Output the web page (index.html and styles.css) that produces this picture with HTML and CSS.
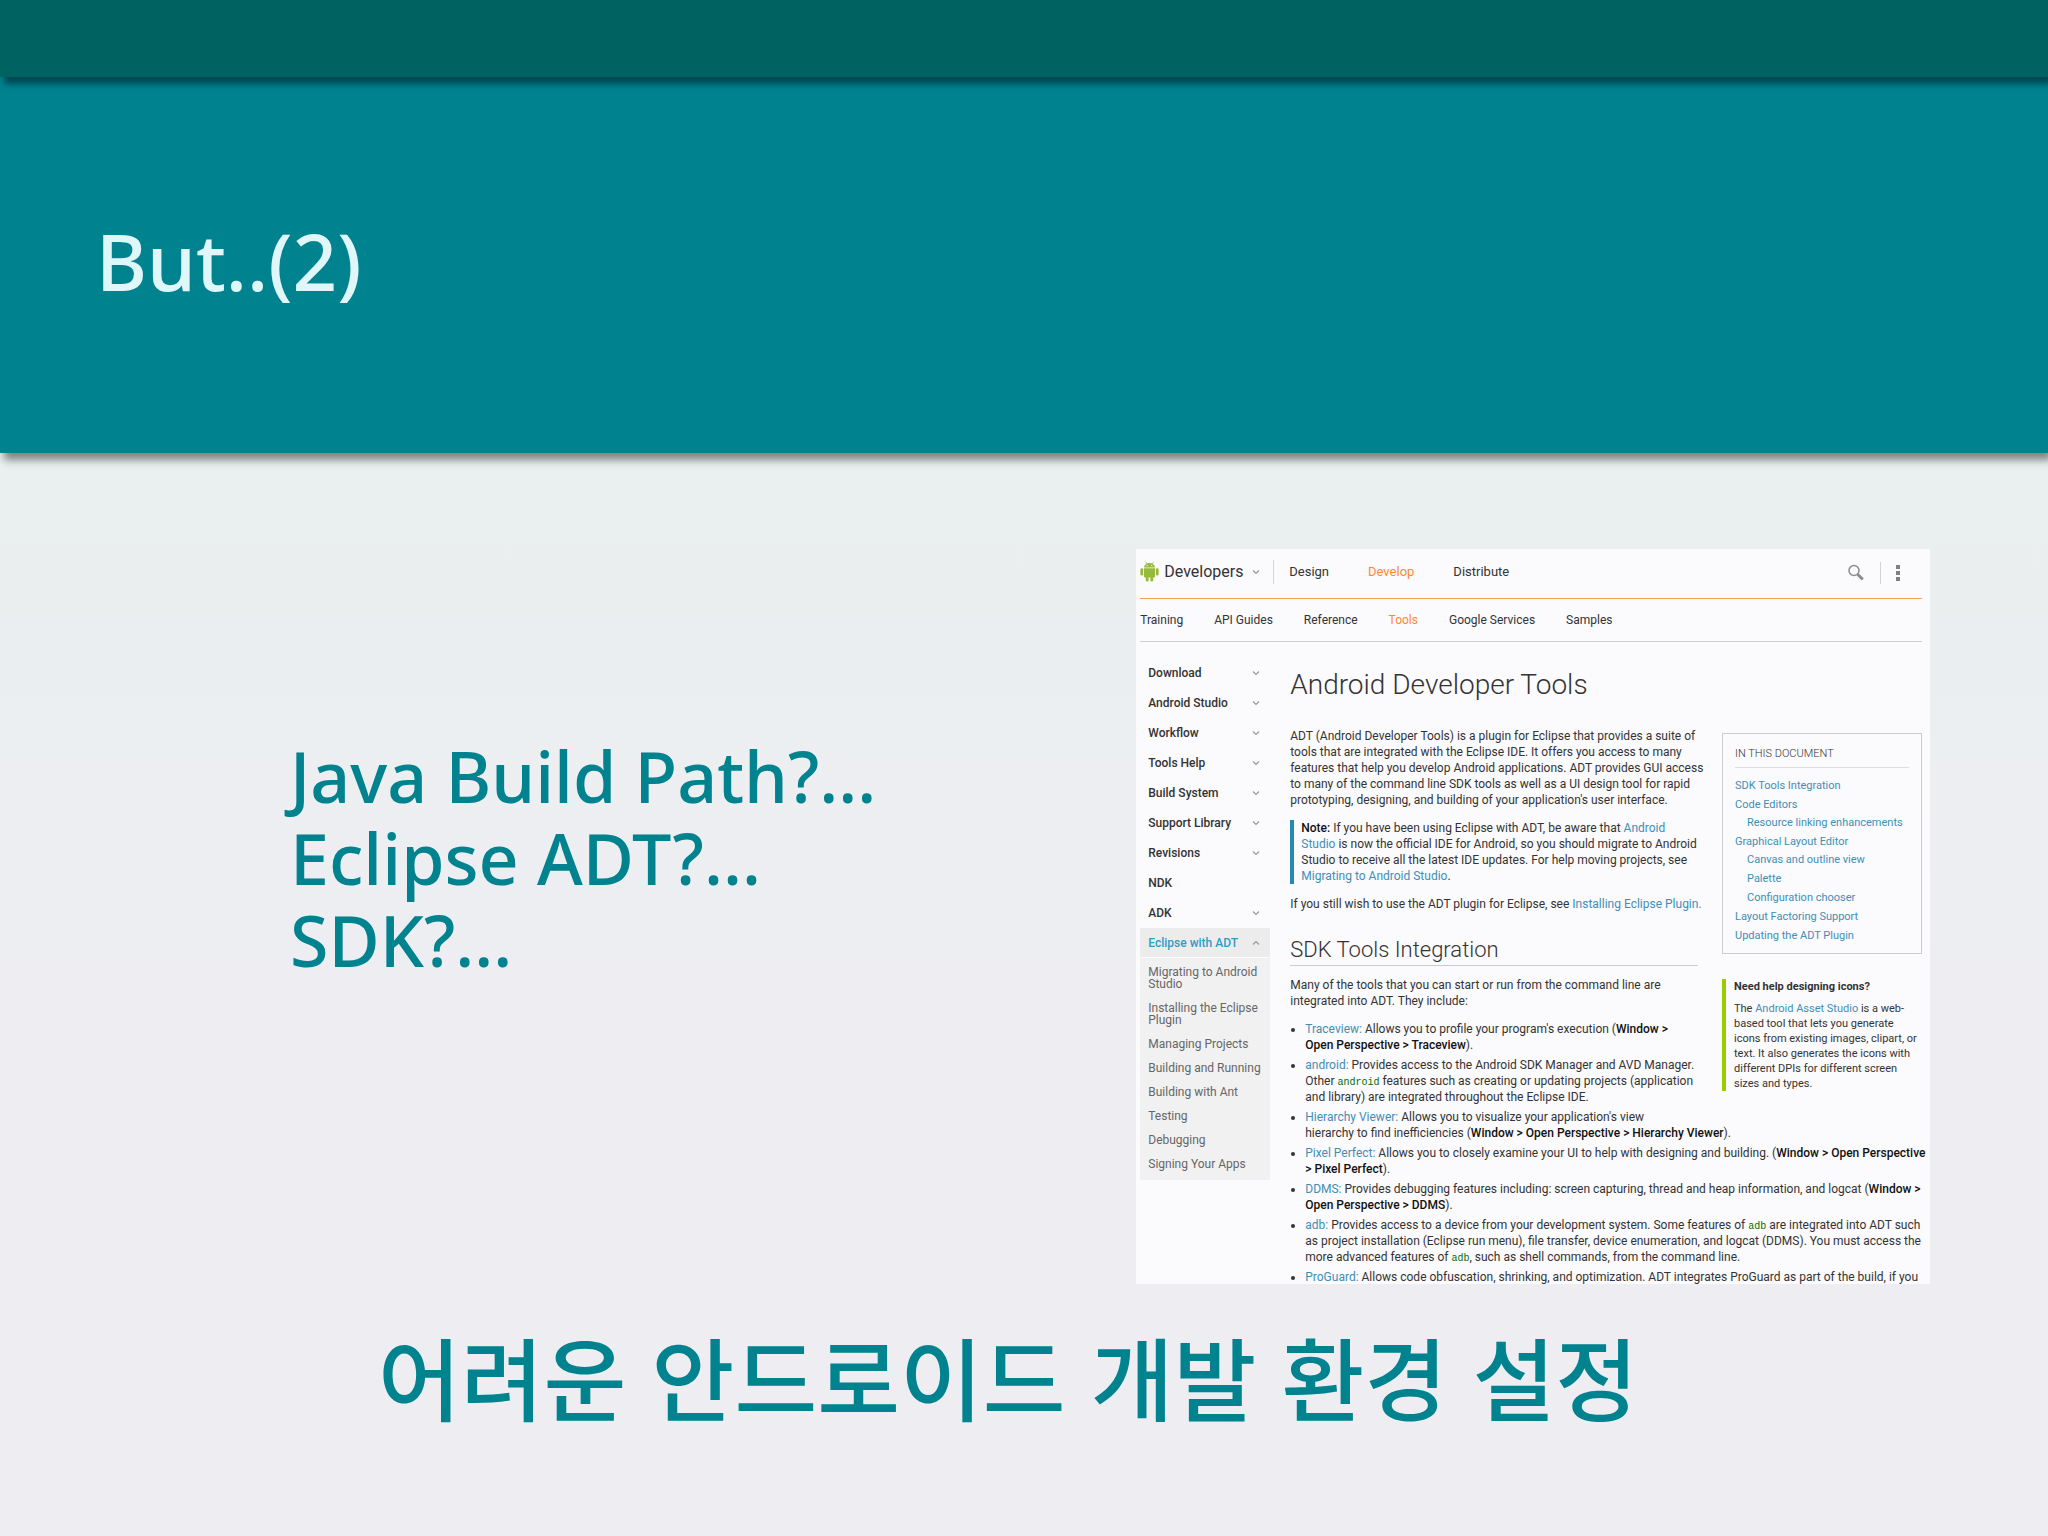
FILE: index.html
```html
<!DOCTYPE html>
<html lang="ko">

<head>
    <meta charset="UTF-8">
    <meta name="viewport" content="width=device-width, initial-scale=1.0">
    <title>But..(2)</title>
    <link rel="stylesheet" href="styles.css">
</head>

<body>
    <svg class="sprite" aria-hidden="true">
        <symbol id="chevron" viewBox="0 0 8 6">
            <path d="M1 1.5l3 3 3-3" fill="none" stroke="#999" stroke-width="1.2" />
        </symbol>
    </svg>

    <div class="status-bar"></div>
    <header class="title-bar">
        <h1>But..(2)</h1>
    </header>

    <main class="slide">
        <div class="columns">
            <p class="questions">Java Build Path?...<br>Eclipse ADT?...<br>SDK?...</p>

            <!-- Android Developers page -->
            <section class="page">
                <div class="page-header">
                    <a class="brand" href="#">
                        <svg class="robot" viewBox="0 0 19 21">
                            <g fill="#97b93c">
                                <path d="M4 6.500C4.200 3.800 6.400 1.900 9.500 1.900S14.800 3.800 15 6.500z" />
                                <path d="M5.500.6l1.600 2.400M13.500.6l-1.600 2.400" stroke="#97b93c" stroke-width=".7" />
                                <path d="M4 7.200h11v8a1.400 1.400 0 0 1-1.400 1.400H5.400A1.400 1.400 0 0 1 4 15.200z" />
                                <rect x=".4" y="7.200" width="2.800" height="7.400" rx="1.400" />
                                <rect x="15.800" y="7.200" width="2.800" height="7.400" rx="1.400" />
                                <rect x="5.800" y="14" width="2.800" height="6.600" rx="1.400" />
                                <rect x="10.400" y="14" width="2.800" height="6.600" rx="1.400" />
                            </g>
                            <circle cx="7.200" cy="4.400" r=".6" fill="#fff" />
                            <circle cx="11.800" cy="4.400" r=".6" fill="#fff" />
                        </svg>
                        <span>Developers</span>
                        <svg class="chevron"><use href="#chevron" /></svg>
                    </a>
                    <nav class="main-nav">
                        <a href="#">Design</a>
                        <a href="#" class="active">Develop</a>
                        <a href="#">Distribute</a>
                    </nav>
                    <button class="icon-button search" aria-label="Search">
                        <svg width="18" height="18" viewBox="0 0 18 18">
                            <circle cx="7" cy="6.500" r="5" fill="none" stroke="#8c8c8c" stroke-width="1.500" />
                            <path d="M10.800 10.500l5 5" stroke="#8c8c8c" stroke-width="3" />
                        </svg>
                    </button>
                    <button class="icon-button more" aria-label="More">
                        <svg width="4" height="16" viewBox="0 0 4 16">
                            <path d="M0 0h4v4H0zM0 6h4v4H0zM0 12h4v4H0z" fill="#808080" />
                        </svg>
                    </button>
                </div>

                <nav class="sub-nav">
                    <a href="#">Training</a>
                    <a href="#">API Guides</a>
                    <a href="#">Reference</a>
                    <a href="#" class="active">Tools</a>
                    <a href="#">Google Services</a>
                    <a href="#">Samples</a>
                </nav>

                <div class="page-body">
                    <nav class="side-nav">
                        <a href="#">Download <svg class="chevron"><use href="#chevron" /></svg></a>
                        <a href="#">Android Studio <svg class="chevron"><use href="#chevron" /></svg></a>
                        <a href="#">Workflow <svg class="chevron"><use href="#chevron" /></svg></a>
                        <a href="#">Tools Help <svg class="chevron"><use href="#chevron" /></svg></a>
                        <a href="#">Build System <svg class="chevron"><use href="#chevron" /></svg></a>
                        <a href="#">Support Library <svg class="chevron"><use href="#chevron" /></svg></a>
                        <a href="#">Revisions <svg class="chevron"><use href="#chevron" /></svg></a>
                        <a href="#">NDK</a>
                        <a href="#">ADK <svg class="chevron"><use href="#chevron" /></svg></a>
                        <div class="expanded">
                            <a href="#" class="current">Eclipse with ADT <svg class="chevron up"><use href="#chevron" /></svg></a>
                            <ul>
                                <li><a href="#">Migrating to Android<br>Studio</a></li>
                                <li><a href="#">Installing the Eclipse<br>Plugin</a></li>
                                <li><a href="#">Managing Projects</a></li>
                                <li><a href="#">Building and Running</a></li>
                                <li><a href="#">Building with Ant</a></li>
                                <li><a href="#">Testing</a></li>
                                <li><a href="#">Debugging</a></li>
                                <li><a href="#">Signing Your Apps</a></li>
                            </ul>
                        </div>
                    </nav>

                    <article class="article">
                        <h2>Android Developer Tools</h2>

                        <aside class="aside">
                            <div class="toc">
                                <h4>IN THIS DOCUMENT</h4>
                                <ul>
                                    <li><a href="#">SDK Tools Integration</a></li>
                                    <li><a href="#">Code Editors</a>
                                        <ul>
                                            <li><a href="#">Resource linking enhancements</a></li>
                                        </ul>
                                    </li>
                                    <li><a href="#">Graphical Layout Editor</a>
                                        <ul>
                                            <li><a href="#">Canvas and outline view</a></li>
                                            <li><a href="#">Palette</a></li>
                                            <li><a href="#">Configuration chooser</a></li>
                                        </ul>
                                    </li>
                                    <li><a href="#">Layout Factoring Support</a></li>
                                    <li><a href="#">Updating the ADT Plugin</a></li>
                                </ul>
                            </div>
                            <div class="help">
                                <h4>Need help designing icons?</h4>
                                <p>The <a href="#">Android Asset Studio</a> is a web-<br>based tool that lets you generate<br>icons from existing images, clipart, or<br>text. It also generates the icons with<br>different DPIs for different screen<br>sizes and types.</p>
                            </div>
                        </aside>

                        <p>ADT (Android Developer Tools) is a plugin for Eclipse that provides a suite of<br>tools that are integrated with the Eclipse IDE. It offers you access to many<br>features that help you develop Android applications. ADT provides GUI access<br>to many of the command line SDK tools as well as a UI design tool for rapid<br>prototyping, designing, and building of your application's user interface.</p>
                        <p class="note"><strong>Note:</strong> If you have been using Eclipse with ADT, be aware that <a href="#">Android<br>Studio</a> is now the official IDE for Android, so you should migrate to Android<br>Studio to receive all the latest IDE updates. For help moving projects, see<br><a href="#">Migrating to Android Studio</a>.</p>
                        <p>If you still wish to use the ADT plugin for Eclipse, see <a href="#">Installing Eclipse Plugin.</a></p>

                        <h3>SDK Tools Integration</h3>
                        <p>Many of the tools that you can start or run from the command line are<br>integrated into ADT. They include:</p>
                        <ul class="tools">
                            <li><a href="#">Traceview:</a> Allows you to profile your program's execution (<strong>Window &gt;<br>Open Perspective &gt; Traceview</strong>).</li>
                            <li><a href="#">android:</a> Provides access to the Android SDK Manager and AVD Manager.<br>Other <code>android</code> features such as creating or updating projects (application<br>and library) are integrated throughout the Eclipse IDE.</li>
                            <li><a href="#">Hierarchy Viewer:</a> Allows you to visualize your application's view<br>hierarchy to find inefficiencies (<strong>Window &gt; Open Perspective &gt; Hierarchy Viewer</strong>).</li>
                            <li><a href="#">Pixel Perfect:</a> Allows you to closely examine your UI to help with designing and building. (<strong>Window &gt; Open Perspective<br>&gt; Pixel Perfect</strong>).</li>
                            <li><a href="#">DDMS:</a> Provides debugging features including: screen capturing, thread and heap information, and logcat (<strong>Window &gt;<br>Open Perspective &gt; DDMS</strong>).</li>
                            <li><a href="#">adb:</a> Provides access to a device from your development system. Some features of <code>adb</code> are integrated into ADT such<br>as project installation (Eclipse run menu), file transfer, device enumeration, and logcat (DDMS). You must access the<br>more advanced features of <code>adb</code>, such as shell commands, from the command line.</li>
                            <li><a href="#">ProGuard:</a> Allows code obfuscation, shrinking, and optimization. ADT integrates ProGuard as part of the build, if you</li>
                        </ul>
                    </article>
                </div>
            </section>
        </div>

        <p class="conclusion">어려운 안드로이드 개발 환경 설정</p>
    </main>
</body>

</html>
```

FILE: styles.css
```css
* {
    box-sizing: border-box;
}

body {
    display: flex;
    flex-direction: column;
    min-height: 100vh;
    margin: 0;
    font-family: "Noto Sans", "Noto Sans CJK KR", sans-serif;
    color: #00838f;
}

h1,
h2,
h3,
h4,
p,
ul {
    margin: 0;
    padding: 0;
}

ul {
    list-style: none;
}

a {
    color: inherit;
    text-decoration: none;
}

.sprite {
    position: absolute;
    width: 0;
    height: 0;
}

/* Slide header */
.status-bar {
    z-index: 2;
    height: 77px;
    background: #006261;
    box-shadow: 4px 7px 6px rgba(0, 50, 60, 0.7);
}

.title-bar {
    z-index: 1;
    display: flex;
    align-items: center;
    height: 376px;
    padding: 0 96px 8px;
    background: #00828f;
    box-shadow: 4px 7px 8px rgba(0, 0, 0, 0.45);
}

.title-bar h1 {
    font-size: 78px;
    font-weight: 500;
    line-height: 104px;
    color: #e0f7fa;
}

/* Slide content */
.slide {
    flex: 1;
    padding: 96px 118px 0 290px;
    background: linear-gradient(#eaefef, #eeeef2 50%);
}

.columns {
    display: flex;
    justify-content: space-between;
    align-items: flex-start;
}

.questions {
    padding-top: 186px;
    font-size: 70px;
    font-weight: 500;
    line-height: 82px;
    white-space: nowrap;
}

.conclusion {
    padding: 26px 0 0 88px;
    font-family: "Noto Sans CJK KR", sans-serif;
    font-size: 90px;
    font-weight: 500;
    line-height: 130px;
    white-space: nowrap;
}

/* Android Developers page */
.page {
    flex: 0 0 48.4%;
    padding: 0 8px 0 4px;
    overflow: hidden;
    background: #fbfafc;
    font-family: Roboto, sans-serif;
    font-size: 12px;
    line-height: 16px;
    color: #333;
    white-space: nowrap;
}

.page-header {
    display: flex;
    align-items: center;
    height: 50px;
    padding-bottom: 4px;
    border-bottom: 1px solid #f0a24c;
}

.brand {
    display: flex;
    align-items: center;
    width: 134px;
    height: 24px;
    border-right: 1px solid #d4d4d4;
    font-size: 16px;
}

.robot {
    width: 19px;
    height: 21px;
    margin-right: 5px;
}

.chevron {
    width: 8px;
    height: 6px;
}

.brand .chevron {
    margin-left: 9px;
}

.chevron.up {
    transform: rotate(180deg);
}

.main-nav {
    display: flex;
    flex: 1;
    gap: 39px;
    padding-left: 15px;
    font-size: 13px;
}

.active {
    color: #ff8833;
}

.icon-button {
    display: flex;
    align-items: center;
    height: 22px;
    margin: 2px 0 0;
    padding: 0;
    border: none;
    background: none;
}

.search {
    padding-right: 15px;
}

.more {
    padding: 0 22px 0 15px;
    border-left: 1px solid #d4d4d4;
}

.sub-nav {
    display: flex;
    align-items: center;
    gap: 31px;
    height: 43px;
    border-bottom: 1px solid #cfcfd1;
}

.page-body {
    display: flex;
    height: 642px;
}

.side-nav {
    flex: 0 0 130px;
    padding-top: 16px;
    font-weight: 500;
}

.side-nav > a,
.current {
    display: flex;
    align-items: center;
    justify-content: space-between;
    height: 30px;
    padding: 0 10px 0 8px;
}

.expanded {
    background: #f1f1f2;
}

.current {
    border-bottom: 1px solid #fbfafc;
    background: #ececed;
    color: #2f9cc5;
}

.expanded ul {
    padding: 2px 0 4px 8px;
}

.expanded li {
    padding: 6px 0;
    font-weight: 400;
    line-height: 12px;
    color: #666;
}

/* Article */
.article {
    flex: 1;
    min-width: 0;
    padding-left: 20px;
}

.article h2 {
    padding: 24px 0;
    font-size: 28px;
    font-weight: 300;
    line-height: 38px;
}

.article a {
    color: #3f8fb5;
}

.article p {
    margin-bottom: 12px;
}

.article .note {
    display: flow-root;
    padding-left: 7px;
    border-left: 4px solid #258aaf;
}

.article h3 {
    display: flow-root;
    margin: 23px 0 11px;
    border-bottom: 1px solid #ccc;
    font-size: 22px;
    font-weight: 300;
    line-height: 30px;
}

strong {
    font-weight: 500;
    color: #111;
}

code {
    font-family: "Liberation Mono", monospace;
    font-size: 10px;
    line-height: 10px;
    color: #007000;
}

.tools {
    list-style: disc;
}

.tools li {
    margin: 0 0 4px 15px;
}

.aside {
    float: right;
    width: 200px;
    margin: 5px 0 12px 24px;
    font-size: 11px;
    line-height: 15px;
}

.toc {
    height: 221px;
    padding: 12px 12px 0;
    border: 1px solid #ccc;
}

.toc h4 {
    margin-bottom: 7px;
    padding-bottom: 5px;
    border-bottom: 1px solid #ddd;
    font-size: 11px;
    font-weight: 300;
    line-height: 16px;
}

.toc li {
    padding-top: 2px;
    line-height: 17px;
}

.toc ul ul {
    margin-top: -1px;
    padding-left: 12px;
}

.help {
    margin-top: 25px;
    padding-left: 8px;
    border-left: 4px solid #99cc00;
}

.help h4 {
    margin-bottom: 7px;
    font-size: 11px;
    font-weight: 700;
}

.help p {
    margin: 0;
}
```
